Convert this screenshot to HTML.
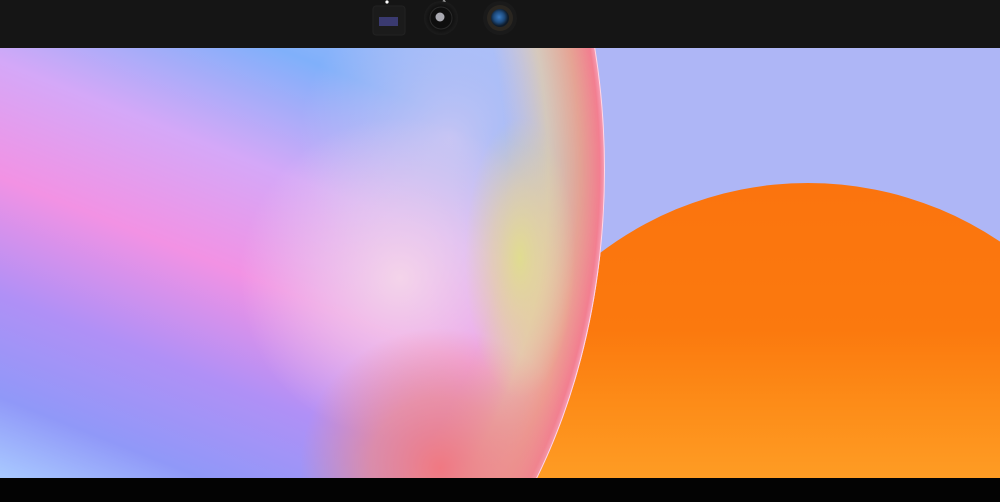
<!DOCTYPE html>
<html><head><style>
html,body{margin:0;padding:0;width:1000px;height:502px;overflow:hidden;background:#000}
.top{position:absolute;left:0;top:0;width:1000px;height:48px;background:#151515}
.main{position:absolute;left:0;top:48px;width:1000px;height:430px;background:#aeb6f6;overflow:hidden}
.bot{position:absolute;left:0;top:478px;width:1000px;height:24px;background:#030303}
</style></head><body>
<div class="top">
 <svg width="1000" height="48" style="position:absolute;left:0;top:0">
  <defs>
   <radialGradient id="l1"><stop offset="0" stop-color="#222"/><stop offset="0.7" stop-color="#111"/><stop offset="1" stop-color="#1c1c1c"/></radialGradient>
   <radialGradient id="bl" cx="0.45" cy="0.45"><stop offset="0" stop-color="#3a7ac0"/><stop offset="0.6" stop-color="#1d4a7c"/><stop offset="1" stop-color="#0e1a28"/></radialGradient>
  </defs>
  <rect x="373" y="6" width="32" height="29" rx="3" fill="#1b1b1b" stroke="#222"/>
  <rect x="379" y="17" width="19" height="9" fill="#3a3a70"/>
  <circle cx="387" cy="2" r="1.6" fill="#fff"/>
  <circle cx="444" cy="2" r="1.6" fill="#fff"/>
  <circle cx="441" cy="18" r="17" fill="url(#l1)"/>
  <circle cx="441" cy="18" r="11" fill="#0e0e0e" stroke="#2a2a2a"/>
  <circle cx="440" cy="17" r="4.5" fill="#a8a8b0"/>
  <circle cx="500" cy="18" r="17" fill="#1a1a1a"/>
  <circle cx="500" cy="18" r="13" fill="#2a2620"/>
  <circle cx="500" cy="18" r="9" fill="url(#bl)"/>
 </svg>
</div>
<div class="main">
 <svg width="1000" height="430" style="position:absolute;left:0;top:0">
  <defs>
   <linearGradient id="org" gradientUnits="userSpaceOnUse" x1="0" y1="135" x2="0" y2="430">
    <stop offset="0" stop-color="#fb740e"/><stop offset="0.5" stop-color="#fb790e"/><stop offset="0.75" stop-color="#fd8c18"/><stop offset="1" stop-color="#fe9c24"/>
   </linearGradient>
   <clipPath id="bub"><ellipse cx="250" cy="122" rx="355" ry="524"/></clipPath>
   <linearGradient id="base" gradientUnits="userSpaceOnUse" x1="300" y1="-100" x2="78" y2="458">
    <stop offset="0" stop-color="#a8c0fa"/>
    <stop offset="0.17" stop-color="#80b0fa"/>
    <stop offset="0.36" stop-color="#d4a8f8"/>
    <stop offset="0.54" stop-color="#f292e4"/>
    <stop offset="0.72" stop-color="#b090f6"/>
    <stop offset="0.88" stop-color="#9098f8"/>
    <stop offset="1" stop-color="#a8c8ff"/>
   </linearGradient>
   <radialGradient id="w" cx="400" cy="230" r="160" gradientUnits="userSpaceOnUse"><stop offset="0" stop-color="#f4d4ea"/><stop offset="0.5" stop-color="#f0d0ec" stop-opacity="0.55"/><stop offset="1" stop-color="#f0d0ec" stop-opacity="0"/></radialGradient>
   <radialGradient id="tr" cx="450" cy="90" r="150" gradientUnits="userSpaceOnUse"><stop offset="0" stop-color="#c4c4f4"/><stop offset="1" stop-color="#c4c4f4" stop-opacity="0"/></radialGradient>
   <radialGradient id="rim" cx="0" cy="0" r="1" gradientUnits="userSpaceOnUse" gradientTransform="translate(250 122) scale(355 524)">
    <stop offset="0.72" stop-color="#e8c8c8" stop-opacity="0"/>
    <stop offset="0.84" stop-color="#e4cca8" stop-opacity="0.75"/>
    <stop offset="0.93" stop-color="#eca088" stop-opacity="0.9"/>
    <stop offset="0.985" stop-color="#f27e90"/>
    <stop offset="1" stop-color="#f6a0b8"/>
   </radialGradient>
   <linearGradient id="mg" gradientUnits="userSpaceOnUse" x1="260" y1="0" x2="380" y2="0">
    <stop offset="0" stop-color="#000"/><stop offset="1" stop-color="#fff"/>
   </linearGradient>
   <mask id="m"><rect width="620" height="430" fill="url(#mg)"/></mask>
   <radialGradient id="y" cx="0" cy="0" r="1" gradientUnits="userSpaceOnUse" gradientTransform="translate(520 210) scale(55 140)"><stop offset="0" stop-color="#e0dc90"/><stop offset="0.5" stop-color="#e4d498" stop-opacity="0.6"/><stop offset="1" stop-color="#e4d498" stop-opacity="0"/></radialGradient>
   <radialGradient id="s" cx="440" cy="420" r="140" gradientUnits="userSpaceOnUse"><stop offset="0" stop-color="#f07882"/><stop offset="0.5" stop-color="#ee8a8c" stop-opacity="0.7"/><stop offset="1" stop-color="#ee8a8c" stop-opacity="0"/></radialGradient>
  </defs>
  <circle cx="808" cy="479" r="344" fill="url(#org)"/>
  <g clip-path="url(#bub)">
   <rect x="0" y="0" width="620" height="430" fill="url(#base)"/>
   <rect width="620" height="430" fill="url(#tr)"/>
   <rect width="620" height="430" fill="url(#w)"/>
   <rect width="620" height="430" fill="url(#rim)" mask="url(#m)"/>
   <rect width="620" height="430" fill="url(#s)"/>
   <rect width="620" height="430" fill="url(#y)"/>
   <ellipse cx="250" cy="122" rx="355" ry="524" fill="none" stroke="#ffd8e8" stroke-width="2" mask="url(#m)"/>
  </g>
 </svg>
</div>
<div class="bot"></div>
</body></html>
